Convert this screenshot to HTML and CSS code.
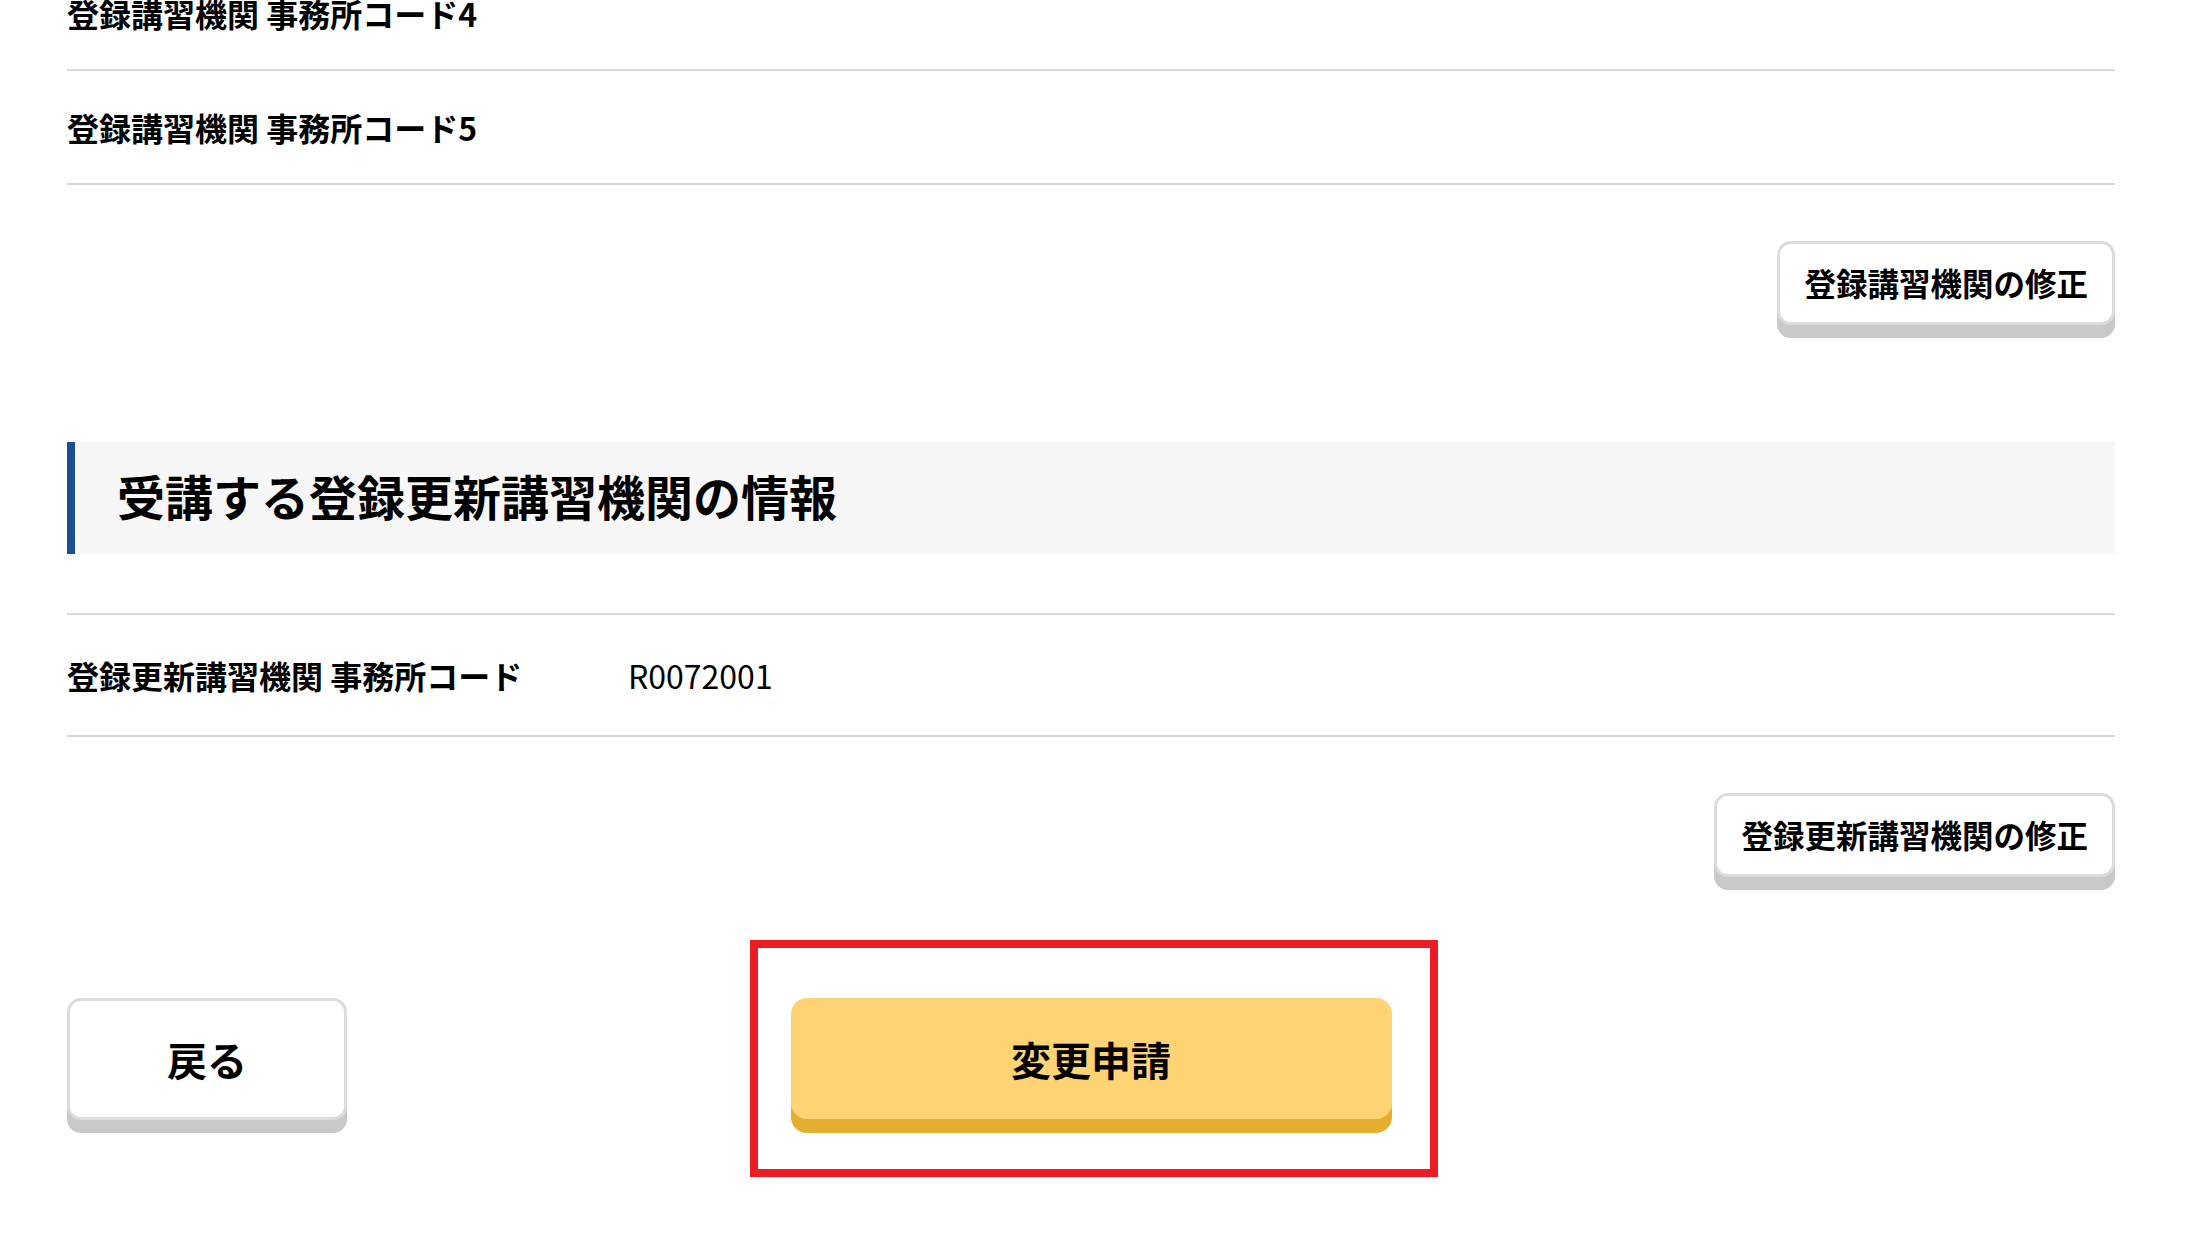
FILE: index.html
```html
<!DOCTYPE html>
<html lang="ja">
<head>
<meta charset="utf-8">
<title>変更申請</title>
<link rel="stylesheet" href="styles.css">
</head>
<body>
<main class="page">
  <section class="section first">
    <div class="row">
      <div class="label">登録講習機関 事務所コード4</div>
      <div class="value"></div>
    </div>
    <div class="row">
      <div class="label">登録講習機関 事務所コード5</div>
      <div class="value"></div>
    </div>
    <div class="actions">
      <button class="btn btn-white">登録講習機関の修正</button>
    </div>
  </section>

  <section class="section">
    <h2 class="heading">受講する登録更新講習機関の情報</h2>
    <div class="rows">
      <div class="row">
        <div class="label">登録更新講習機関 事務所コード</div>
        <div class="value">R0072001</div>
      </div>
    </div>
    <div class="actions">
      <button class="btn btn-white">登録更新講習機関の修正</button>
    </div>
  </section>

  <div class="footer">
    <div class="footer-left">
      <button class="btn btn-white btn-back">戻る</button>
    </div>
    <div class="footer-center">
      <div class="highlight">
        <button class="btn btn-primary">変更申請</button>
      </div>
    </div>
    <div class="footer-right"></div>
  </div>
</main>
</body>
</html>
```

FILE: styles.css
```css
html, body {
  margin: 0;
  padding: 0;
  background: #ffffff;
}

body {
  font-family: "Noto Sans CJK JP", "Noto Sans", sans-serif;
  color: #000000;
  padding-top: 1px;
}

.page {
  width: 2048px;
  margin: -44px 0 0 67px;
  padding-bottom: 80px;
}

.row {
  display: flex;
  align-items: center;
  padding: 32px 0;
  border-bottom: 2px solid #d9d9d9;
}

.label {
  width: 561px;
  flex: none;
  font-size: 32px;
  font-weight: 700;
  line-height: 48px;
}

.value {
  font-size: 32px;
  font-weight: 400;
  line-height: 56px;
}

.value:empty {
  line-height: 0;
}

.actions {
  display: flex;
  justify-content: flex-end;
  margin-top: 56px;
}

.btn {
  font-family: "Noto Sans CJK JP", "Noto Sans", sans-serif;
  font-weight: 700;
  color: #000000;
  cursor: pointer;
  margin: 0;
}

.btn-white {
  background: #ffffff;
  border: 3px solid #dcdcdc;
  border-radius: 14px;
  box-shadow: 0 13px 0 #c9c9c9;
  height: 84px;
  padding: 0 24px;
  font-size: 31.5px;
  line-height: 1;
}

.heading {
  margin: 117px 0 0 0;
  background: #f7f7f7;
  border-left: 8px solid #1c4f91;
  padding: 17px 0 23px 42px;
  font-size: 48px;
  font-weight: 700;
  line-height: 72px;
}

.rows {
  margin-top: 59px;
  border-top: 2px solid #d9d9d9;
}

.footer {
  display: grid;
  grid-template-columns: 1fr auto 1fr;
  align-items: start;
  margin-top: 121px;
}

.btn-back {
  width: 280px;
  height: 122px;
  font-size: 40px;
  padding: 0;
}

.highlight {
  position: relative;
}

.highlight::after {
  content: "";
  position: absolute;
  left: -41px;
  right: -46px;
  top: -58px;
  bottom: -58px;
  border: 8px solid #ec1c24;
  pointer-events: none;
}

.btn-primary {
  display: block;
  width: 601px;
  height: 121px;
  background: #fed373;
  border: none;
  border-radius: 16px;
  box-shadow: 0 14px 0 #e4ae31;
  font-size: 40px;
  line-height: 1;
}
```
